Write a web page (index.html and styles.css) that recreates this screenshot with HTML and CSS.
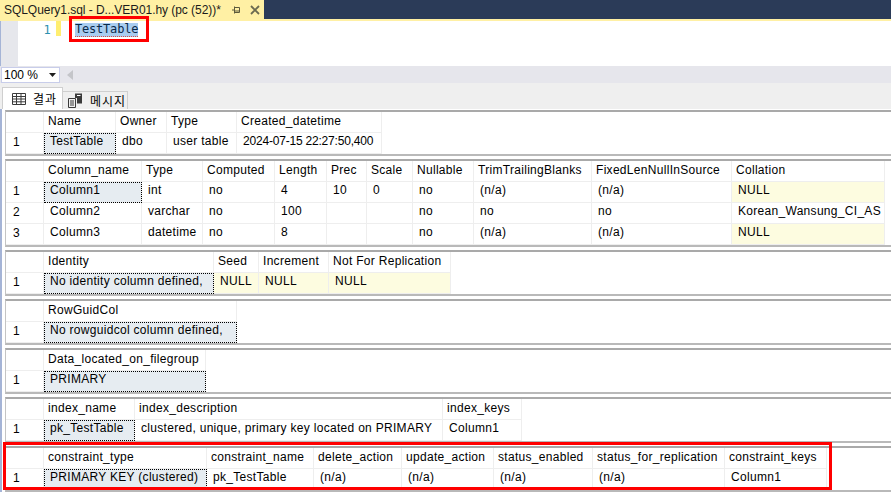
FILE: index.html
```html
<!DOCTYPE html>
<html lang="ko">
<head>
<meta charset="utf-8">
<title>SQLQuery1.sql</title>
<link rel="stylesheet" href="styles.css">
</head>
<body>
<div class="titlebar">
  <div class="doc-tab">
    <span class="doc-title">SQLQuery1.sql - D...VER01.hy (pc (52))*</span>
    <svg class="pin" width="8" height="10" viewBox="0 0 8 10"><path d="M0 5H2.500M2.500 1.500V8.500M2.500 2.500H7.500V7.500H2.500M2.500 6H7.500" fill="none" stroke="#5c5a3c" stroke-width="1"/></svg>
    <svg class="close" width="10" height="10" viewBox="0 0 10 10"><path d="M1 1L9 9M9 1L1 9" fill="none" stroke="#6b6a50" stroke-width="1.8"/></svg>
  </div>
</div>
<div class="editor">
  <div class="gutter"></div>
  <div class="lineno">1</div>
  <div class="changebar"></div>
  <div class="code"><span class="sel">TestTable</span></div>
</div>
<div class="zoombar">
  <div class="zoomcombo"><span>100 %</span><svg width="7" height="4" viewBox="0 0 7 4"><path d="M0 0H7L3.500 4Z" fill="#1e1e1e"/></svg></div>
  <svg class="scrollarrow" width="6" height="10" viewBox="0 0 6 10"><path d="M6 0V10L0 5Z" fill="#c4c5c9"/></svg>
</div>
<div class="tabs">
  <div class="tab active">
    <svg width="14" height="12" viewBox="0 0 14 12"><path d="M.5 .5H13.500V11.500H.5ZM.5 3.500H13.500M.5 6H13.500M.5 8.800H13.500M4.500 .5V11.500M9 .5V11.500" fill="none" stroke="#3a3a3a"/></svg>
    <span>결과</span>
  </div>
  <div class="tab">
    <svg width="15" height="15" viewBox="0 0 15 15"><path d="M.5 5.500H7.500V14.500H.5ZM2 8H6M2 10H6M2 12H6" fill="none" stroke="#3a3a3a"/><path d="M7 .5H14V10.500H9V5H7Z" fill="#3a3a3a"/><path d="M9 2.500H12.500" stroke="#fff"/></svg>
    <span>메시지</span>
  </div>
</div>
<main class="results">
  <section class="grid g1">
    <div class="cell"></div><div class="cell head">Name</div><div class="cell head">Owner</div><div class="cell head">Type</div><div class="cell head">Created_datetime</div>
    <div class="cell num">1</div><div class="cell current">TestTable</div><div class="cell">dbo</div><div class="cell">user table</div><div class="cell date">2024-07-15 22:27:50,400</div>
  </section>
  <section class="grid g2">
    <div class="cell"></div><div class="cell head">Column_name</div><div class="cell head">Type</div><div class="cell head">Computed</div><div class="cell head">Length</div><div class="cell head">Prec</div><div class="cell head">Scale</div><div class="cell head">Nullable</div><div class="cell head">TrimTrailingBlanks</div><div class="cell head">FixedLenNullInSource</div><div class="cell head">Collation</div>
    <div class="cell num">1</div><div class="cell current">Column1</div><div class="cell">int</div><div class="cell">no</div><div class="cell">4</div><div class="cell">10</div><div class="cell">0</div><div class="cell">no</div><div class="cell">(n/a)</div><div class="cell">(n/a)</div><div class="cell null">NULL</div>
    <div class="cell num">2</div><div class="cell">Column2</div><div class="cell">varchar</div><div class="cell">no</div><div class="cell">100</div><div class="cell"></div><div class="cell"></div><div class="cell">no</div><div class="cell">no</div><div class="cell">no</div><div class="cell">Korean_Wansung_CI_AS</div>
    <div class="cell num">3</div><div class="cell">Column3</div><div class="cell">datetime</div><div class="cell">no</div><div class="cell">8</div><div class="cell"></div><div class="cell"></div><div class="cell">no</div><div class="cell">(n/a)</div><div class="cell">(n/a)</div><div class="cell null">NULL</div>
  </section>
  <section class="grid g3">
    <div class="cell"></div><div class="cell head">Identity</div><div class="cell head">Seed</div><div class="cell head">Increment</div><div class="cell head">Not For Replication</div>
    <div class="cell num">1</div><div class="cell current">No identity column defined,</div><div class="cell null">NULL</div><div class="cell null">NULL</div><div class="cell null">NULL</div>
  </section>
  <section class="grid g4">
    <div class="cell"></div><div class="cell head">RowGuidCol</div>
    <div class="cell num">1</div><div class="cell current">No rowguidcol column defined,</div>
  </section>
  <section class="grid g5">
    <div class="cell"></div><div class="cell head">Data_located_on_filegroup</div>
    <div class="cell num">1</div><div class="cell current">PRIMARY</div>
  </section>
  <section class="grid g6">
    <div class="cell"></div><div class="cell head">index_name</div><div class="cell head">index_description</div><div class="cell head">index_keys</div>
    <div class="cell num">1</div><div class="cell current">pk_TestTable</div><div class="cell">clustered, unique, primary key located on PRIMARY</div><div class="cell">Column1</div>
  </section>
  <section class="grid g7">
    <div class="cell"></div><div class="cell head">constraint_type</div><div class="cell head">constraint_name</div><div class="cell head">delete_action</div><div class="cell head">update_action</div><div class="cell head">status_enabled</div><div class="cell head">status_for_replication</div><div class="cell head">constraint_keys</div>
    <div class="cell num">1</div><div class="cell current">PRIMARY KEY (clustered)</div><div class="cell">pk_TestTable</div><div class="cell">(n/a)</div><div class="cell">(n/a)</div><div class="cell">(n/a)</div><div class="cell">(n/a)</div><div class="cell">Column1</div>
  </section>
</main>
<div class="mark mark-query"></div>
<div class="mark mark-constraint"></div>
</body>
</html>
```
FILE: styles.css
```css
html, body {
  margin: 0;
  padding: 0;
  width: 891px;
  height: 495px;
  overflow: hidden;
  background: #fff;
}
body {
  position: relative;
  font-family: "Liberation Sans", sans-serif;
  font-size: 12px;
  letter-spacing: 0.3px;
  color: #000;
}
.titlebar {
  height: 19px;
  background: #2b3b58;
  border-bottom: 2px solid #fff0a4;
}
.doc-tab {
  width: 264px;
  height: 19px;
  background: #fff0a4;
  display: flex;
  align-items: center;
  padding-left: 4px;
  box-sizing: border-box;
}
.doc-title {
  flex: none;
  width: 228px;
  font-size: 12px;
  letter-spacing: -0.05px;
  color: #1b1b1b;
  white-space: nowrap;
}
.pin { flex: none; margin-right: 10px; }
.close { flex: none; }
.editor {
  height: 45px;
  position: relative;
  display: flex;
}
.gutter {
  width: 17px;
  background: #e6e7ec;
  border-left: 1px solid #a5b4d6;
}
.lineno {
  width: 38px;
  text-align: right;
  padding-right: 5px;
  box-sizing: border-box;
  color: #2b91af;
  font-family: "DejaVu Sans Mono", monospace;
  padding-top: 2px;
}
.changebar {
  width: 5px;
  height: 15px;
  background: #ffee70;
}
.code {
  padding: 2px 0 0 14px;
  font-family: "DejaVu Sans Mono", monospace;
  font-size: 12px;
  letter-spacing: -0.2px;
}
.sel {
  display: block;
  width: 63px;
  height: 13px;
  line-height: 13px;
  background: #a9cdf0;
  color: #0a2a4a;
  border-bottom: 1px dotted #d8504a;
}
.zoombar {
  height: 17px;
  background: #e6e6ec;
  display: flex;
  align-items: center;
}
.zoomcombo {
  width: 59px;
  height: 16px;
  margin-left: 1px;
  background: #fff;
  border: 1px solid #c8cdea;
  box-sizing: border-box;
  display: flex;
  align-items: center;
  justify-content: space-between;
  padding: 0 3px 0 2px;
  font-size: 12px;
  letter-spacing: 0;
}
.scrollarrow { margin-left: 7px; }
.tabs {
  height: 26px;
  background: #efefef;
  display: flex;
  align-items: flex-end;
  padding-left: 2px;
  box-sizing: border-box;
}
.tab {
  height: 18px;
  width: 66px;
  margin-left: -1px;
  border: 1px solid #cfcfcf;
  border-bottom: 0;
  box-sizing: border-box;
  display: flex;
  align-items: center;
  gap: 7px;
  padding-left: 5px;
  background: #efefef;
  font-family: "Noto Sans CJK KR", sans-serif;
  font-size: 12px;
  letter-spacing: 1px;
}
.tab.active {
  height: 22px;
  width: 61px;
  margin-left: 0;
  background: #fff;
  padding-left: 9px;
}
.results {
  display: flex;
  flex-direction: column;
  gap: 3px;
  padding: 1px 0 0 3px;
  border-left: 2px solid #a5b4d6;
  box-sizing: border-box;
}
.grid {
  display: grid;
  grid-auto-rows: 21px;
  border-top: 2px solid #a9a9a9;
  border-bottom: 2px solid #b9b9b9;
  border-left: 1px solid #c4c4c4;
}
.g1 { grid-template-columns: 38px 72px 51px 70px 145px; }
.g2 { grid-template-columns: 38px 98px 61px 72px 52px 40px 46px 61px 118px 140px 153px; }
.g3 { grid-template-columns: 38px 170px 45px 70px 122px; }
.g4 { grid-template-columns: 38px 193px; }
.g5 { grid-template-columns: 38px 162px; }
.g6 { grid-template-columns: 38px 91px 308px 79px; }
.g7 { grid-template-columns: 38px 163px 107px 88px 92px 99px 132px 102px; }
.cell {
  box-sizing: border-box;
  border-right: 1px solid #eeeeee;
  border-bottom: 1px solid #eeeeee;
  padding-left: 6px;
  line-height: 16px;
  white-space: nowrap;
  overflow: hidden;
}
.cell.head { padding-left: 4px; line-height: 19px; }
.cell.num { padding-left: 7px; line-height: 18px; }
.cell.date { letter-spacing: -0.2px; }
.cell.null { background: #fdfce0; }
.cell.current {
  background: #e6ecf1;
  outline: 1px dotted #000;
  outline-offset: -1px;
}
.mark {
  position: absolute;
  box-sizing: border-box;
  border: 3px solid #ff0000;
}
.mark-query {
  left: 69px;
  top: 16px;
  width: 80px;
  height: 26px;
}
.mark-constraint {
  left: 3px;
  top: 442px;
  width: 829px;
  height: 48px;
}
```
